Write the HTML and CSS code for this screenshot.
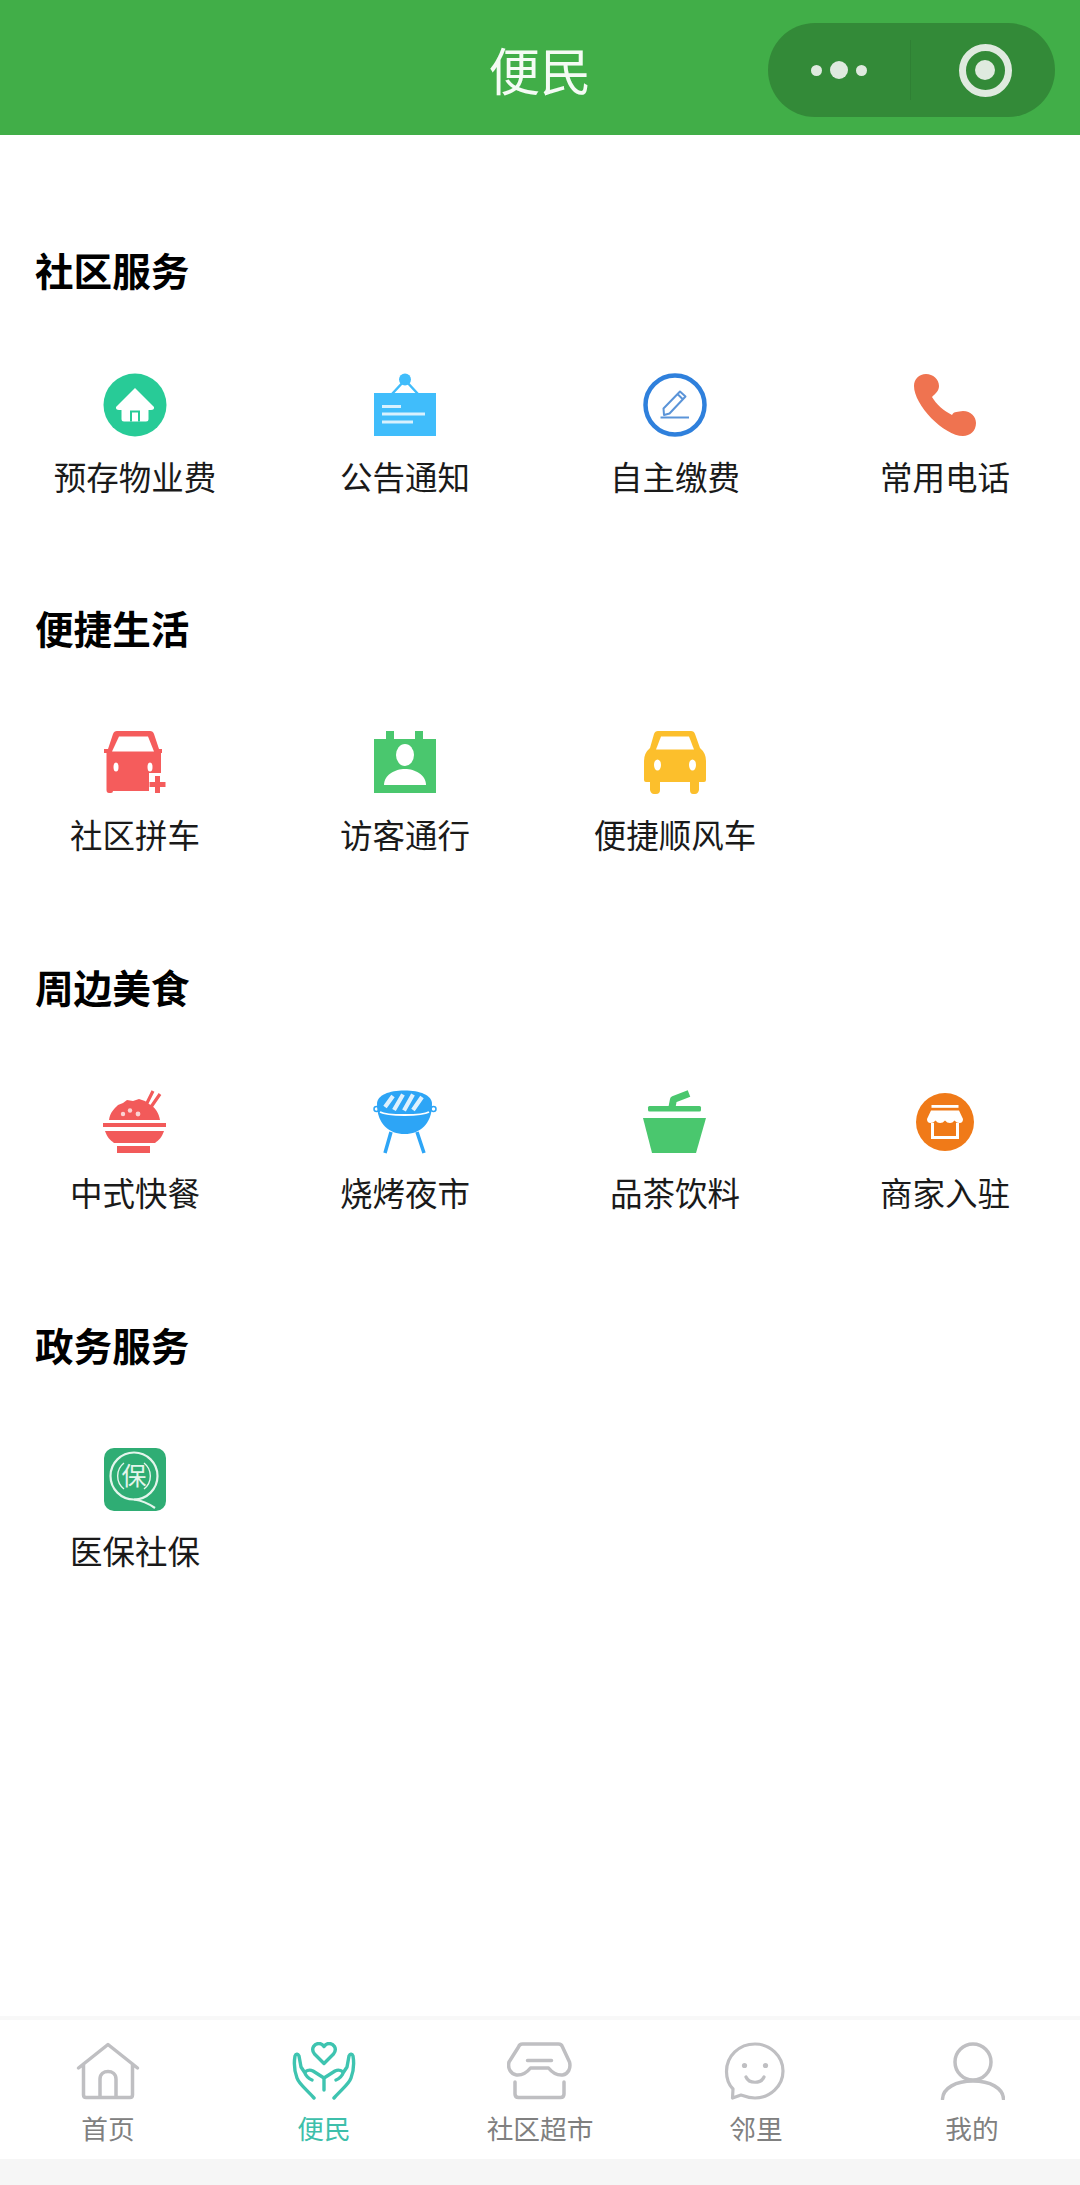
FILE: index.html
```html
<!DOCTYPE html>
<html lang="zh-CN">
<head>
<meta charset="utf-8">
<title>便民</title>
<link rel="stylesheet" href="styles.css">
</head>
<body>
<div class="page">
  <header class="navbar">
    <h1 class="nav-title">便民</h1>
    <div class="capsule">
      <div class="capsule-more"><i class="dot"></i><i class="dot dot-big"></i><i class="dot"></i></div>
      <div class="capsule-line"></div>
      <div class="capsule-close"><i class="target"></i></div>
    </div>
  </header>

  <main class="content">
    <section class="group">
      <h2 class="group-title">社区服务</h2>
      <div class="grid">
        <a class="item">
          <svg class="icon" viewBox="0 0 64 64"><circle cx="32" cy="32" r="31.500" fill="#28CB97"/><path d="M32 15 L51 34 Q51.500 37 48 37 L45.500 37 L45.500 46 Q45.500 48.500 43 48.500 L21 48.500 Q18.500 48.500 18.500 46 L18.500 37 L16 37 Q12.500 37 13 34 Z" fill="#fff"/><path d="M28 48.500 V38.500 H36 V48.500" fill="none" stroke="#28CB97" stroke-width="2"/></svg>
          <span class="label">预存物业费</span>
        </a>
        <a class="item">
          <svg class="icon" viewBox="0 0 64 64"><rect x="1" y="20" width="62" height="43" fill="#40BDFB"/><circle cx="32" cy="6.500" r="6" fill="#40BDFB"/><path d="M19 21 L32 7 L45 21" fill="none" stroke="#40BDFB" stroke-width="2.500"/><path d="M9 33.500 H28 M9 41 H52 M9 49 H40" stroke="#fff" stroke-width="3.200" opacity=".8"/></svg>
          <span class="label">公告通知</span>
        </a>
        <a class="item">
          <svg class="icon" viewBox="0 0 64 64"><circle cx="32" cy="32" r="29.500" fill="none" stroke="#2F80DC" stroke-width="4.500"/><path d="M21 42 L20.500 35.500 L37 18.500 L42.500 23.500 L26.500 40.500 Z M34.500 21 L40 26.500" fill="none" stroke="#5B94D8" stroke-width="2" stroke-linejoin="round"/><path d="M17.500 44.500 H46" stroke="#5B94D8" stroke-width="2"/></svg>
          <span class="label">自主缴费</span>
        </a>
        <a class="item">
          <svg class="icon" viewBox="0 0 64 64"><path d="M13 1 C20 1 26 6 26 13 C26 18 22 21 19 24 C23 31 31 38 39 42 C41 38 45 39 50 38 C58 38 63 44 63 50 C63 58 57 63 50 63 C31 63 1 32 1 13 C1 6 6 1 13 1 Z" fill="#EF7350"/></svg>
          <span class="label">常用电话</span>
        </a>
      </div>
    </section>

    <section class="group">
      <h2 class="group-title">便捷生活</h2>
      <div class="grid">
        <a class="item">
          <svg class="icon" viewBox="0 0 64 64"><path d="M14 0 H47 Q50 0 51 3 L56 18 L59 18 V22 L58 22 V52 L52 60 H10 V60 Q10 62 8 62 H6 Q3.500 62 3.500 59 V22 L1 22 V18 L5 18 L10 3 Q11 0 14 0 Z" fill="#F55C5C"/><path d="M16 5.500 H45 L51 20.500 H9 Z" fill="#fff"/><ellipse cx="13" cy="36" rx="2.500" ry="4.500" fill="#fff"/><ellipse cx="47" cy="36" rx="2.500" ry="4.500" fill="#fff"/><path d="M46 64 V42 H64 V64 Z" fill="#fff"/><path d="M54.500 45 V62 M46.500 53.500 H62.500" stroke="#F55C5C" stroke-width="5"/></svg>
          <span class="label">社区拼车</span>
        </a>
        <a class="item">
          <svg class="icon" viewBox="0 0 64 64"><path d="M1 8 H13 V0 H21 V8 H42 V0 H50 V8 H63 V62 H1 Z" fill="#4AC76E"/><ellipse cx="32" cy="24" rx="9" ry="11" fill="#fff"/><path d="M11 54 C11 44 22 38 32 38 C42 38 53 44 53 54 Z" fill="#fff"/></svg>
          <span class="label">访客通行</span>
        </a>
        <a class="item">
          <svg class="icon" viewBox="0 0 64 64"><path d="M15 0 H48 Q51 0 52 3 L57 17 Q63 22 63 30 V49 Q63 51 61 51 H56 V59 Q55 63 52 63 H50 Q47 63 47 59 V51 H17 V59 Q17 63 13 63 H11 Q8 63 7 59 V51 H3 Q1 51 1 49 V30 Q1 22 7 17 L11 3 Q12 0 15 0 Z" fill="#FCBF2C"/><path d="M18 5.500 H46 L51 18.500 H13 Z" fill="#fff"/><ellipse cx="14.500" cy="34" rx="3.500" ry="5.500" fill="#fff"/><ellipse cx="49.500" cy="34" rx="3.500" ry="5.500" fill="#fff"/></svg>
          <span class="label">便捷顺风车</span>
        </a>
      </div>
    </section>

    <section class="group">
      <h2 class="group-title">周边美食</h2>
      <div class="grid">
        <a class="item">
          <svg class="icon" viewBox="0 0 64 64"><path d="M6 30 C7 22 12 18 15 15 L20 13 L24 10 L30 11 L36 9 L42 11 L46 14 C52 17 56 23 57 30 Z" fill="#F25A5A"/><path d="M43 15 L50 1 M48 17 L57 4" stroke="#F25A5A" stroke-width="3.200"/><circle cx="20" cy="24" r="2.200" fill="#FBD3D3"/><circle cx="27" cy="20.500" r="2.200" fill="#FBD3D3"/><circle cx="35" cy="24" r="2.400" fill="#FBD3D3"/><rect x="0" y="33" width="63" height="4" fill="#F25A5A"/><path d="M2 41 H61 C59 47 56 50 52 53 H11 C7 50 4 47 2 41 Z" fill="#F25A5A"/><rect x="14" y="56" width="33" height="7" fill="#F25A5A"/></svg>
          <span class="label">中式快餐</span>
        </a>
        <a class="item">
          <svg class="icon" viewBox="0 0 64 64"><path d="M4 14 C4 5 16 0.500 31.500 0.500 C47 0.500 59 5 59 14 C59 34 47 44 31.500 44 C16 44 4 34 4 14 Z" fill="#2DA5F6"/><path d="M7 22 C14 26 49 26 56 22" fill="none" stroke="#fff" stroke-width="1.800"/><path d="M12 17 L20 6 M21 20 L30 4.500 M31 20.500 L40 4.500 M40 20 L49 7" stroke="#fff" stroke-width="4.200" opacity=".85"/><circle cx="3.500" cy="19" r="2.500" fill="none" stroke="#2DA5F6" stroke-width="1.500"/><circle cx="60.500" cy="19" r="2.500" fill="none" stroke="#2DA5F6" stroke-width="1.500"/><path d="M18 42 L12 63 M44 42 L51 63" stroke="#2DA5F6" stroke-width="3.500"/></svg>
          <span class="label">烧烤夜市</span>
        </a>
        <a class="item">
          <svg class="icon" viewBox="0 0 64 64"><path d="M0 28 H63 L53 63 H9 Z" fill="#4AC76E"/><rect x="5" y="16" width="53" height="5.500" rx="1.500" fill="#4AC76E"/><path d="M29 17 L30.500 9.500 L46 3.500" fill="none" stroke="#4AC76E" stroke-width="7" stroke-linejoin="round"/></svg>
          <span class="label">品茶饮料</span>
        </a>
        <a class="item">
          <svg class="icon" viewBox="0 0 64 64"><circle cx="32" cy="32" r="29" fill="#F07A18"/><rect x="18.500" y="15" width="27" height="2.800" fill="#fff"/><path d="M18 20.500 H46 L50 29 Q50 33 46.500 33 Q43.500 33 41.500 30.500 Q39.500 33 37 33 Q34 33 32 30.500 Q30 33 27 33 Q24.500 33 22.500 30.500 Q20.500 33 17.500 33 Q14 33 14 29 Z" fill="#fff"/><path d="M19.500 33 V47.500 H44.500 V33" fill="none" stroke="#fff" stroke-width="3"/></svg>
          <span class="label">商家入驻</span>
        </a>
      </div>
    </section>

    <section class="group">
      <h2 class="group-title">政务服务</h2>
      <div class="grid">
        <a class="item">
          <svg class="icon" viewBox="0 0 64 64"><rect x="1" y="0" width="62" height="63" rx="10" fill="#2FAD74"/><circle cx="31" cy="28" r="23.500" fill="none" stroke="#E4F5EC" stroke-width="2.200"/><path d="M31 51.500 Q42 53 52 60" fill="none" stroke="#E4F5EC" stroke-width="2.200"/><path d="M21 15 A16.500 16.500 0 0 0 21 41 M41 15 A16.500 16.500 0 0 1 41 41" fill="none" stroke="#E4F5EC" stroke-width="1.400"/><text class="icon-char" x="31" y="37" text-anchor="middle">保</text></svg>
          <span class="label">医保社保</span>
        </a>
      </div>
    </section>
  </main>

  <nav class="tabbar">
    <a class="tab">
      <svg class="tab-icon" viewBox="0 0 66 58"><path d="M3.500 26 L33 2.500 L62.500 26 M8.500 22 V53 Q8.500 55.500 11 55.500 H55 Q57.500 55.500 57.500 53 V22 M25 55 V37 C25 27 41 27 41 37 V55" fill="none" stroke="#BFBFC2" stroke-width="3.500" stroke-linejoin="round" stroke-linecap="round"/></svg>
      <span class="tab-label">首页</span>
    </a>
    <a class="tab tab-on">
      <svg class="tab-icon" viewBox="0 0 66 58"><path d="M33 21.500 L23.500 12 C19 6 24 1.500 28 1.500 C30.500 1.500 32 3 33 4.500 C34 3 35.500 1.500 38 1.500 C42 1.500 47 6 42.500 12 Z" fill="none" stroke="#3EC4B0" stroke-width="3.400" stroke-linejoin="round"/><path d="M33 36 V48 M33 36 L22 29 C18 27 14 29 14 31 C14 33 18 37 21 38 M33 36 L44 29 C48 27 52 29 52 31 C52 33 48 37 45 38 M23 56 C15 47 8 42 6 36 C3 28 3 20 4 14 C5 11 7 12 8 14 L10 25 L14 31 M43 56 C51 47 58 42 60 36 C63 28 63 20 62 14 C61 11 59 12 58 14 L56 25 L52 31" fill="none" stroke="#3EC4B0" stroke-width="3.400" stroke-linecap="round" stroke-linejoin="round"/></svg>
      <span class="tab-label">便民</span>
    </a>
    <a class="tab">
      <svg class="tab-icon" viewBox="-1.500 0 66 58"><path d="M14 2 H50 Q53 2 54 5 L61 20 C62.500 26 60 32 54 33 C48 33.500 44 31 40 26 L22 26 C18 31 14 33.500 8 33 C2 32 -1 26 0.500 20 L10 5 Q11 2 14 2 Z M19 18.500 H43" fill="none" stroke="#BFBFC2" stroke-width="3.500" stroke-linejoin="round" stroke-linecap="round"/><path d="M6.500 40 V52 Q6.500 55.500 10 55.500 H52 Q55.500 55.500 55.500 52 V40" fill="none" stroke="#BFBFC2" stroke-width="3.500" stroke-linecap="round"/></svg>
      <span class="tab-label">社区超市</span>
    </a>
    <a class="tab">
      <svg class="tab-icon" viewBox="0 0 66 58"><path d="M10 47 C5 42 3.500 36 3.500 29.500 C3.500 14 16 2 32 2 C47 2 60 14 60 29 C60 44 47 56 32 56 C25 56 21 54 18 53 L9.500 56 Z" fill="none" stroke="#BFBFC2" stroke-width="3.200" stroke-linejoin="round"/><circle cx="21.500" cy="23.500" r="2.600" fill="#BFBFC2"/><circle cx="42.500" cy="23.500" r="2.600" fill="#BFBFC2"/><path d="M23 35 C26 42 38 42 41 35" fill="none" stroke="#BFBFC2" stroke-width="3.200" stroke-linecap="round"/></svg>
      <span class="tab-label">邻里</span>
    </a>
    <a class="tab">
      <svg class="tab-icon" viewBox="0 0 66 58"><circle cx="34" cy="20" r="18" fill="none" stroke="#BFBFC2" stroke-width="3.500"/><path d="M3.500 57 C4 46 17 39 34 39 C51 39 64 46 64.500 57" fill="none" stroke="#BFBFC2" stroke-width="3.500" stroke-linecap="round"/></svg>
      <span class="tab-label">我的</span>
    </a>
  </nav>
  <div class="home-strip"></div>
</div>
</body>
</html>
```

FILE: styles.css
```css
* {
  box-sizing: border-box;
}

html,
body {
  margin: 0;
  padding: 0;
  background: #fff;
}

body {
  font-family: "Noto Sans CJK SC", "Noto Sans", sans-serif;
}

.page {
  width: 1080px;
  height: 2185px;
  display: flex;
  flex-direction: column;
  overflow: hidden;
}

.navbar {
  position: relative;
  height: 135px;
  flex: none;
  display: flex;
  align-items: center;
  justify-content: center;
  padding-top: 2px;
  background: #41AE48;
}

.nav-title {
  margin: 0;
  font-size: 51.500px;
  line-height: 60px;
  font-weight: 400;
  color: #f4fbf4;
}

.capsule {
  position: absolute;
  left: 768px;
  top: 23px;
  width: 287px;
  height: 94px;
  display: flex;
  align-items: center;
  border-radius: 47px;
  background: #338A38;
}

.capsule-more {
  width: 142px;
  display: flex;
  align-items: center;
  justify-content: center;
  gap: 8px;
}

.dot {
  width: 11px;
  height: 11px;
  border-radius: 50%;
  background: #dfeadf;
}

.dot-big {
  width: 18px;
  height: 18px;
}

.capsule-line {
  width: 1px;
  height: 60px;
  background: #2f8034;
}

.capsule-close {
  flex: 1;
  display: flex;
  align-items: center;
  justify-content: center;
  padding-left: 4px;
}

.target {
  width: 53px;
  height: 53px;
  border: 7px solid #dfeadf;
  border-radius: 50%;
  display: flex;
  align-items: center;
  justify-content: center;
}

.target::after {
  content: "";
  width: 20px;
  height: 20px;
  border-radius: 50%;
  background: #dfeadf;
}

.content {
  flex: 1;
  padding-top: 107px;
}

.group {
  margin-bottom: 102.800px;
}

.group-title {
  margin: 0;
  padding-left: 35px;
  font-size: 38.600px;
  line-height: 54px;
  font-weight: 700;
  color: #000;
}

.grid {
  display: grid;
  grid-template-columns: repeat(4, 270px);
  margin-top: 77px;
}

.item {
  display: flex;
  flex-direction: column;
  align-items: center;
  gap: 16.500px;
}

.icon {
  display: block;
  width: 64px;
  height: 64px;
}

.icon-char {
  font-family: "Noto Sans CJK SC", sans-serif;
  font-size: 25px;
  fill: #E4F5EC;
}

.label {
  font-size: 32.500px;
  line-height: 44px;
  color: #1a1a1a;
  white-space: nowrap;
}

.tabbar {
  flex: none;
  height: 143px;
  display: grid;
  grid-template-columns: repeat(5, 216px);
  border-top: 4px solid #f8f8f8;
  padding-top: 22px;
  background: #fff;
}

.tab {
  display: flex;
  flex-direction: column;
  align-items: center;
}

.tab-icon {
  display: block;
  width: 66px;
  height: 58px;
}

.tab-label {
  margin-top: 9px;
  font-size: 26.700px;
  line-height: 38px;
  color: #808080;
  white-space: nowrap;
}

.tab-on .tab-label {
  color: #3EBFAB;
}

.home-strip {
  flex: none;
  height: 26px;
  background: #f6f6f6;
}
```
